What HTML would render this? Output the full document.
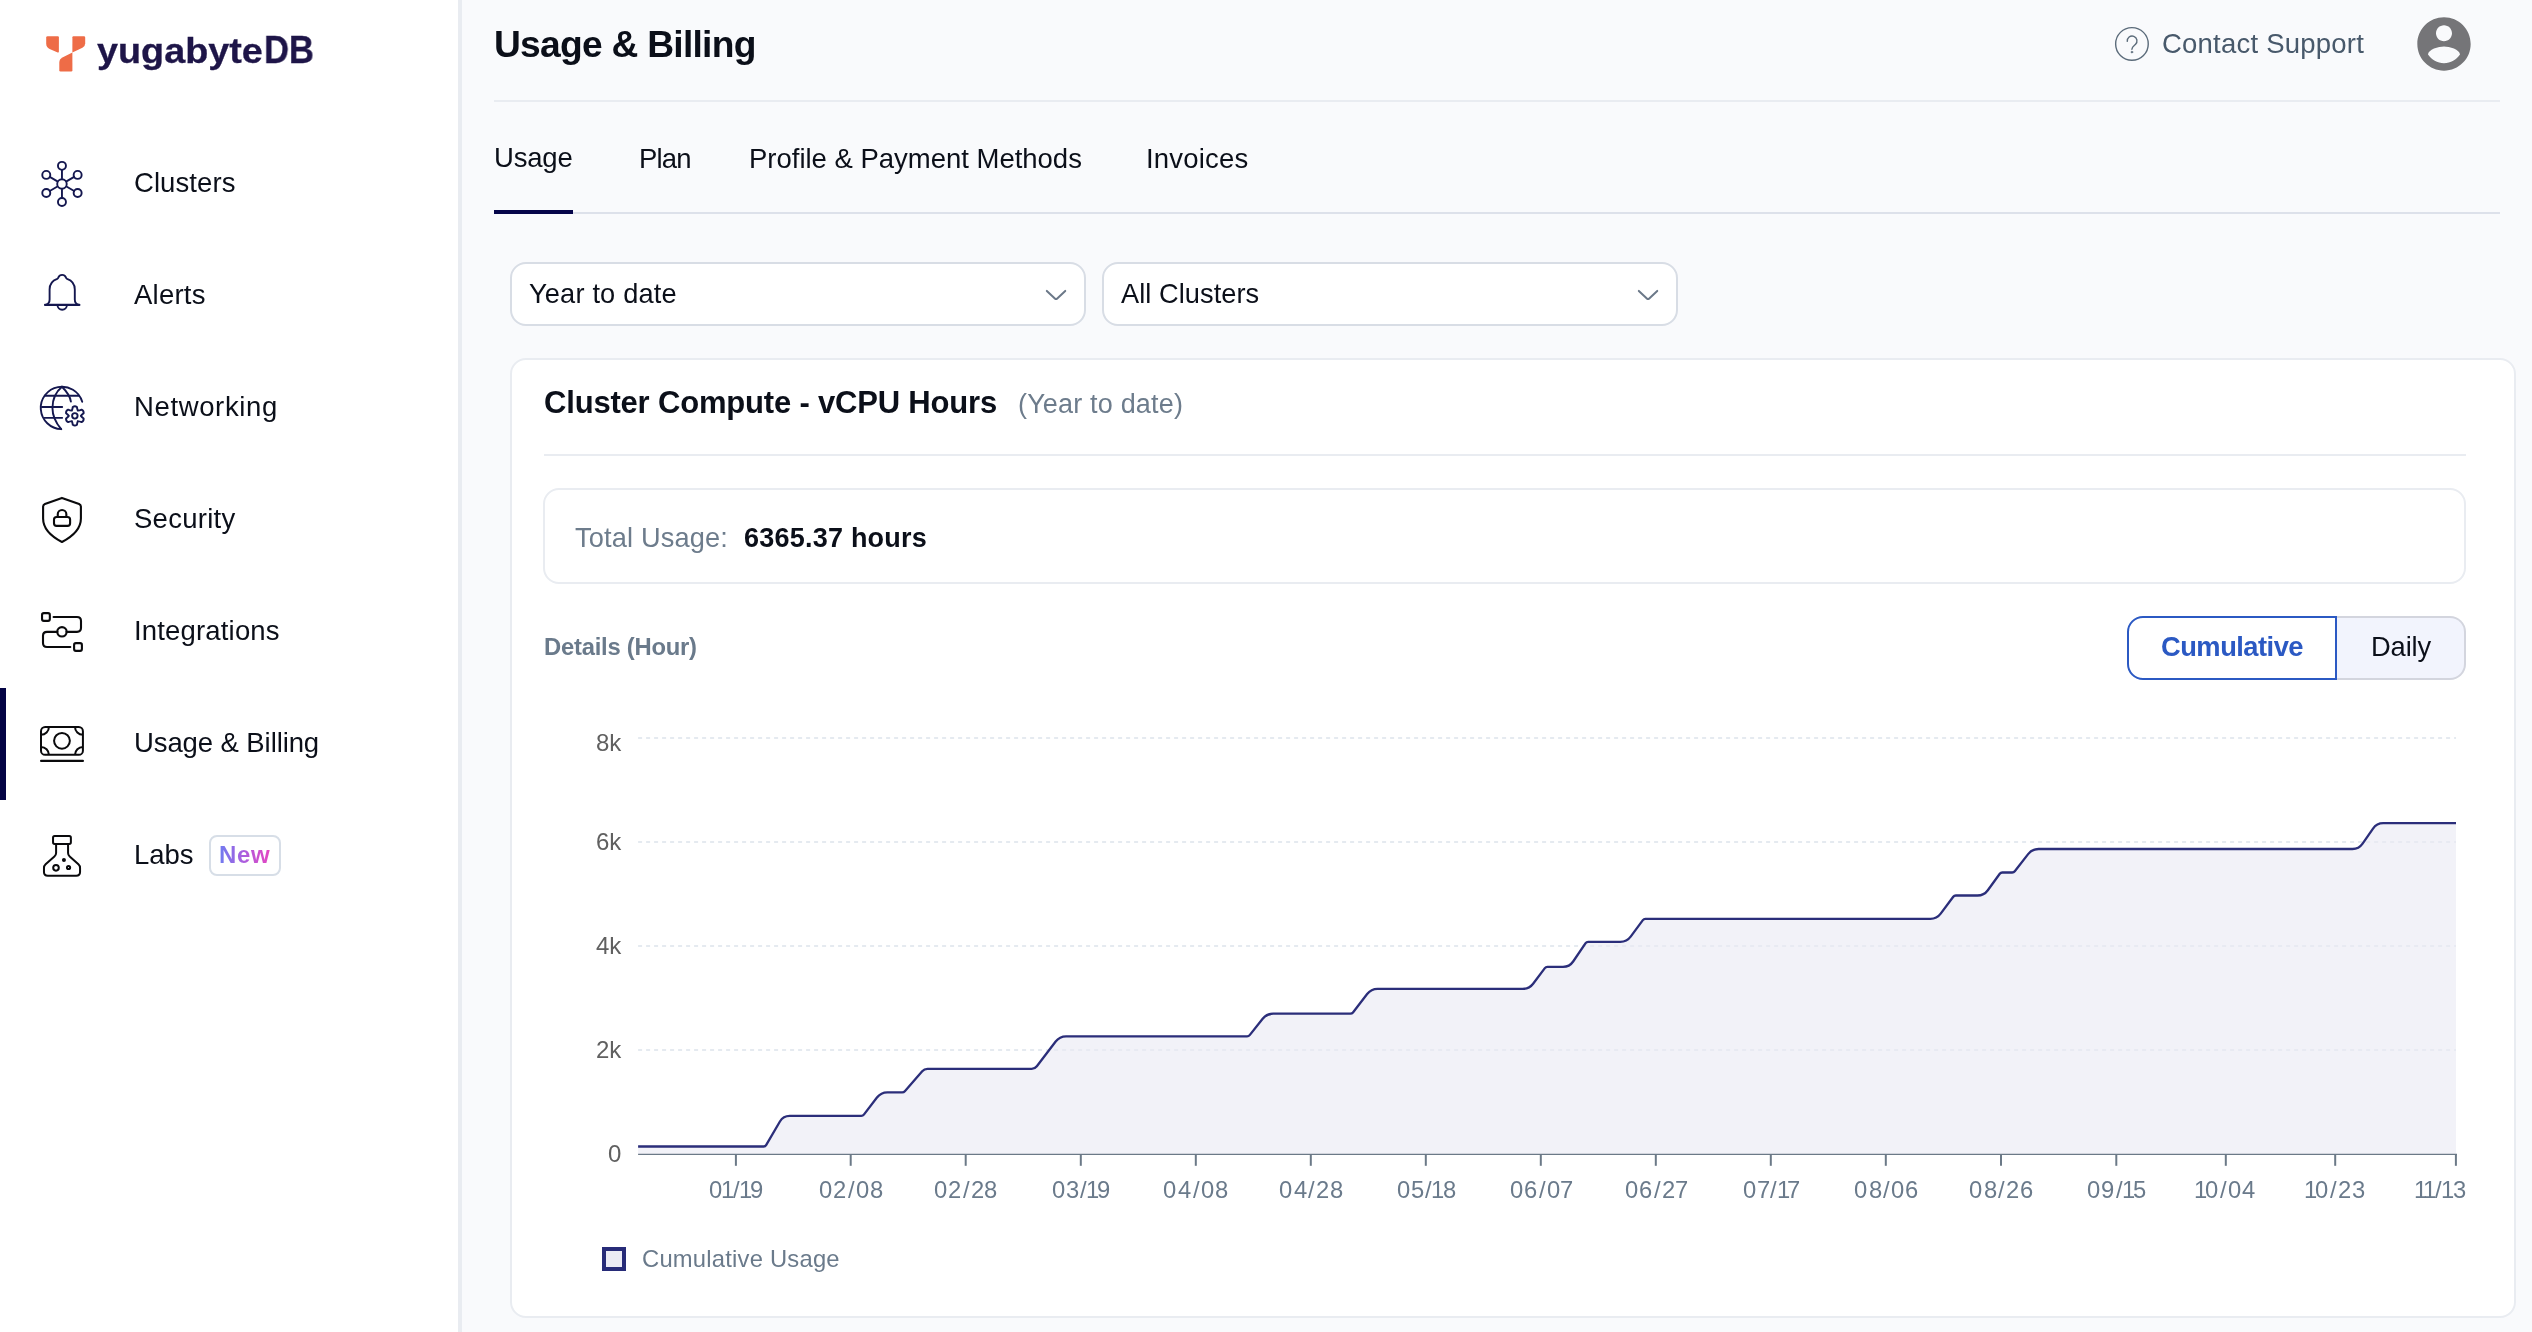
<!DOCTYPE html>
<html lang="en"><head><meta charset="utf-8"><title>Usage &amp; Billing</title>
<style>
html,body{margin:0;padding:0;}
body{width:2532px;height:1332px;overflow:hidden;background:#f9fafc;font-family:"Liberation Sans",sans-serif;position:relative;}
.t{position:absolute;white-space:nowrap;margin:0;padding:0;will-change:transform;}
.a{position:absolute;box-sizing:border-box;}
svg{position:absolute;overflow:visible;}
</style></head><body>

<div class="a" style="left:0;top:0;width:462px;height:1332px;background:#ffffff;border-right:4px solid #e9ecf1;"></div>
<div class="a" style="left:0;top:688px;width:6px;height:112px;background:#040444;"></div>
<svg style="left:0;top:0" width="460" height="100" viewBox="0 0 460 100">
<path d="M47.6 36.2 H57.9 Q58.9 36.2 58.9 37.2 V51.6 Q58.9 52.9 57.7 52.4 L49.6 48.9 Q46.2 47.3 46.2 43.8 V37.6 Q46.2 36.2 47.6 36.2 Z" fill="#ee6c47"/>
<path d="M73.4 36.2 H83.9 Q85.2 36.2 85.2 37.5 V43.2 Q85.2 46.3 82.4 47.7 L72.4 52.6 V37.2 Q72.4 36.2 73.4 36.2 Z" fill="#ee6c47"/>
<path d="M72.4 52.6 V70.3 Q72.4 71.5 71.2 71.5 H60.5 Q59.3 71.5 59.3 70.3 V62.6 Q59.3 59.2 62.4 57.6 Z" fill="#ee6c47"/>
</svg>
<div class="t" style="left:96.90px;top:28.00px;height:46px;line-height:46px;font-size:35.9px;color:#1e1548;letter-spacing:0.000px;font-weight:700;-webkit-text-stroke:0.3px #1e1548;transform:scaleX(1.0521);transform-origin:0 0;">yugabyte</div>
<div class="t" style="left:263.78px;top:25.00px;height:49px;line-height:49px;font-size:38.6px;color:#1e1548;letter-spacing:0.000px;font-weight:700;-webkit-text-stroke:0.3px #1e1548;transform:scaleX(0.8988);transform-origin:0 0;">DB</div>
<div class="t" style="left:133.50px;top:164.00px;height:37px;line-height:37px;font-size:27.5px;color:#0b0f19;letter-spacing:0.076px;">Clusters</div>
<div class="t" style="left:133.50px;top:276.00px;height:37px;line-height:37px;font-size:27.5px;color:#0b0f19;letter-spacing:0.239px;">Alerts</div>
<div class="t" style="left:133.50px;top:388.00px;height:37px;line-height:37px;font-size:27.5px;color:#0b0f19;letter-spacing:0.634px;">Networking</div>
<div class="t" style="left:133.50px;top:500.00px;height:37px;line-height:37px;font-size:27.5px;color:#0b0f19;letter-spacing:0.273px;">Security</div>
<div class="t" style="left:133.50px;top:612.00px;height:37px;line-height:37px;font-size:27.5px;color:#0b0f19;letter-spacing:0.170px;">Integrations</div>
<div class="t" style="left:133.50px;top:724.00px;height:37px;line-height:37px;font-size:27.5px;color:#0b0f19;letter-spacing:-0.094px;">Usage &amp; Billing</div>
<div class="t" style="left:133.50px;top:836.00px;height:37px;line-height:37px;font-size:27.5px;color:#0b0f19;letter-spacing:-0.049px;">Labs</div>
<div class="a" style="left:209px;top:835px;width:72px;height:41px;border:2px solid #d7dee7;border-radius:8px;background:#fff;"></div>
<div class="t" style="left:219.39px;top:838.00px;height:33px;line-height:33px;font-size:24px;color:#8a6be6;letter-spacing:0.600px;font-weight:700;background:linear-gradient(90deg,#6f7cf0 0%,#a75fe0 45%,#e546c2 100%);-webkit-background-clip:text;background-clip:text;color:transparent;">New</div>
<svg style="left:0;top:0" width="460" height="1000" viewBox="0 0 460 1000" fill="none" stroke="#14174f" stroke-width="1.9" stroke-linecap="round" stroke-linejoin="round"><circle cx="61.96" cy="183.94" r="4.75"/><circle cx="61.96" cy="165.84" r="4.0"/><line x1="61.96" y1="178.24" x2="61.96" y2="169.84"/><circle cx="77.64" cy="174.89" r="4.0"/><line x1="66.90" y1="181.09" x2="74.17" y2="176.89"/><circle cx="77.64" cy="192.99" r="4.0"/><line x1="66.90" y1="186.79" x2="74.17" y2="190.99"/><circle cx="61.96" cy="202.04" r="4.0"/><line x1="61.96" y1="189.64" x2="61.96" y2="198.04"/><circle cx="46.28" cy="192.99" r="4.0"/><line x1="57.02" y1="186.79" x2="49.75" y2="190.99"/><circle cx="46.28" cy="174.89" r="4.0"/><line x1="57.02" y1="181.09" x2="49.75" y2="176.89"/></svg>
<svg style="left:0;top:0" width="460" height="1000" viewBox="0 0 460 1000" fill="none" stroke="#14174f" stroke-width="1.9" stroke-linecap="round" stroke-linejoin="round"><path d="M45.0 304.9 H79.4" stroke-width="2.1"/><path d="M46.2 304.6 Q49.6 303.4 49.6 299.4 V289.5 Q49.6 281.6 57.2 278.9 Q58.2 278.4 58.4 277.4 Q59.4 274.9 62.15 274.9 Q64.9 274.9 65.9 277.4 Q66.1 278.4 67.1 278.9 Q74.8 281.6 74.8 289.5 V299.4 Q74.8 303.4 78.2 304.6"/><path d="M57.5 305 A4.7 4.7 0 0 0 66.9 305"/></svg>
<svg style="left:0;top:0" width="460" height="1000" viewBox="0 0 460 1000" fill="none" stroke="#14174f" stroke-width="1.9" stroke-linecap="round" stroke-linejoin="round"><path d="M82.23 401.74 A21.2 21.2 0 1 0 61.22 429.13"/><path d="M61.96 386.74 C55.96 391.74 52.46 399.94 52.46 407.94 C52.46 415.94 56.96 424.14 61.22 429.13"/><path d="M61.96 386.74 C66.96 391.74 70.16 395.94 70.90 401.60"/><path d="M44.8 395.8 H78.6"/><path d="M41.9 406.95 H62.2"/><path d="M44.4 417.85 H62.2"/><circle cx="74.85" cy="415.87" r="2.75"/><path d="M71.85 410.67 Q72.59 408.93 72.78 406.91 Q74.85 405.47 76.92 406.91 Q77.11 408.93 77.85 410.67 Q79.73 410.45 81.58 409.60 Q83.86 410.67 83.65 413.18 Q81.99 414.35 80.85 415.87 Q81.99 417.39 83.65 418.56 Q83.86 421.07 81.58 422.14 Q79.73 421.29 77.85 421.07 Q77.11 422.81 76.92 424.83 Q74.85 426.27 72.78 424.83 Q72.59 422.81 71.85 421.07 Q69.97 421.29 68.12 422.14 Q65.84 421.07 66.05 418.56 Q67.71 417.39 68.85 415.87 Q67.71 414.35 66.05 413.18 Q65.84 410.67 68.12 409.60 Q69.97 410.45 71.85 410.67 Z"/></svg>
<svg style="left:0;top:0" width="460" height="1000" viewBox="0 0 460 1000" fill="none" stroke="#0a0a0c" stroke-width="2.1" stroke-linecap="round" stroke-linejoin="round"><path d="M61.96 497.9 L44.9 503.9 Q43.1 504.6 43.1 506.5 V518.5 C43.1 527.5 49.5 535.5 61.96 542 C74.4 535.5 80.9 527.5 80.9 518.5 V506.5 Q80.9 504.6 79.1 503.9 Z"/><rect x="54.0" y="517.0" width="16.1" height="8.9" rx="2.6"/><path d="M57.75 517 V514.3 A4.3 4.3 0 0 1 66.35 514.3 V517"/></svg>
<svg style="left:0;top:0" width="460" height="1000" viewBox="0 0 460 1000" fill="none" stroke="#0a0a0c" stroke-width="2.1" stroke-linecap="round" stroke-linejoin="round"><rect x="42.04" y="613.1" width="7.8" height="7.8" rx="1.8"/><rect x="74.1" y="643.1" width="7.8" height="7.8" rx="1.8"/><path d="M53.6 616.98 H77 Q81 616.98 81 621 V627.85 Q81 631.85 77 631.85 H66.5"/><circle cx="61.96" cy="631.85" r="4.7"/><path d="M57.4 631.85 H47 Q43 631.85 43 635.85 V642.96 Q43 646.96 47 646.96 H70.3"/></svg>
<svg style="left:0;top:0" width="460" height="1000" viewBox="0 0 460 1000" fill="none" stroke="#0a0a0c" stroke-width="2.0" stroke-linecap="round" stroke-linejoin="round"><rect x="41.0" y="726.95" width="41.92" height="27.9" rx="4.2"/><circle cx="61.96" cy="740.8" r="7.9"/><path d="M48.9 726.95 A7.9 7.9 0 0 1 41 734.85" stroke-linecap="butt"/><path d="M75.02 726.95 A7.9 7.9 0 0 0 82.92 734.85" stroke-linecap="butt"/><path d="M48.9 754.85 A7.9 7.9 0 0 0 41 746.95" stroke-linecap="butt"/><path d="M75.02 754.85 A7.9 7.9 0 0 1 82.92 746.95" stroke-linecap="butt"/><path d="M41.1 760.94 H82.9" stroke-width="2.2"/></svg>
<svg style="left:0;top:0" width="460" height="1000" viewBox="0 0 460 1000" fill="none" stroke="#0a0a0c" stroke-width="2.0" stroke-linecap="round" stroke-linejoin="round"><rect x="53.04" y="836.12" width="17.84" height="7.83" rx="1.6"/><path d="M56.1 843.95 V853 Q56.1 855 54.4 856.5 L45.6 864.3 Q43.97 865.8 43.97 868 V872 Q43.97 875.77 47.8 875.77 H76.2 Q80.05 875.77 80.05 872 V868 Q80.05 865.8 78.4 864.3 L69.7 856.5 Q68.06 855 68.06 853 V843.95"/><circle cx="63.94" cy="859.9" r="1.0" fill="#0a0a0c"/><circle cx="56.0" cy="867.84" r="2.8"/><circle cx="68.55" cy="867.5" r="1.6"/></svg>
<div class="t" style="left:493.57px;top:20.00px;height:48px;line-height:48px;font-size:37.2px;color:#0b0f19;letter-spacing:-0.739px;font-weight:700;">Usage &amp; Billing</div>
<div class="a" style="left:494px;top:100px;width:2006px;height:2px;background:#e9ecf1;"></div>
<svg style="left:2100px;top:10px" width="70" height="70" viewBox="2100 10 70 70" fill="none" stroke="#5b6b7a" stroke-width="1.4" stroke-linecap="round" stroke-linejoin="round">
<circle cx="2131.95" cy="43.9" r="16.3"/>
<path d="M2127.3 41.4 A4.85 4.85 0 1 1 2135.4 44.4 C2133.4 46.2 2132 47 2131.9 49.2"/>
<circle cx="2131.9" cy="52.1" r="0.9" fill="#5b6b7a" stroke-width="0.6"/>
</svg>
<div class="t" style="left:2161.70px;top:25.00px;height:37px;line-height:37px;font-size:27.5px;color:#48596b;letter-spacing:0.219px;">Contact Support</div>
<svg style="left:2412px;top:11.8px" width="64" height="64" viewBox="0 0 24 24"><path fill="#757578" d="M12 2C6.48 2 2 6.48 2 12s4.48 10 10 10 10-4.48 10-10S17.52 2 12 2zm0 3c1.66 0 3 1.34 3 3s-1.34 3-3 3-3-1.34-3-3 1.34-3 3-3zm0 14.2c-2.5 0-4.71-1.28-6-3.22.03-1.99 4-3.08 6-3.08 1.99 0 5.97 1.09 6 3.08-1.29 1.94-3.5 3.22-6 3.22z"/></svg>
<div class="t" style="left:493.68px;top:139.00px;height:37px;line-height:37px;font-size:27.5px;color:#0b0f19;letter-spacing:-0.189px;">Usage</div>
<div class="t" style="left:638.64px;top:140.00px;height:37px;line-height:37px;font-size:27.5px;color:#0b0f19;letter-spacing:-0.835px;">Plan</div>
<div class="t" style="left:749.24px;top:140.00px;height:37px;line-height:37px;font-size:27.5px;color:#0b0f19;letter-spacing:-0.013px;">Profile &amp; Payment Methods</div>
<div class="t" style="left:1145.56px;top:140.00px;height:37px;line-height:37px;font-size:27.5px;color:#0b0f19;letter-spacing:0.206px;">Invoices</div>
<div class="a" style="left:494px;top:212px;width:2006px;height:2px;background:#dde1ea;"></div>
<div class="a" style="left:494px;top:210px;width:79px;height:4px;background:#05054a;"></div>
<div class="a" style="left:510px;top:262px;width:576px;height:64px;border:2px solid #d8dde5;border-radius:16px;background:#fff;"></div>
<div class="t" style="left:528.60px;top:275.00px;height:37px;line-height:37px;font-size:27.2px;color:#0b0f19;letter-spacing:0.179px;">Year to date</div>
<svg style="left:0;top:0" width="2532" height="400" viewBox="0 0 2532 400" fill="none" stroke="#6b7888" stroke-width="2" stroke-linecap="round" stroke-linejoin="round"><path d="M1046.84 290.9 L1054.84 298.4 Q1056.04 299.5 1057.24 298.4 L1065.24 290.9"/></svg>
<div class="a" style="left:1102px;top:262px;width:576px;height:64px;border:2px solid #d8dde5;border-radius:16px;background:#fff;"></div>
<div class="t" style="left:1120.75px;top:275.00px;height:37px;line-height:37px;font-size:27.2px;color:#0b0f19;letter-spacing:0.059px;">All Clusters</div>
<svg style="left:0;top:0" width="2532" height="400" viewBox="0 0 2532 400" fill="none" stroke="#6b7888" stroke-width="2" stroke-linecap="round" stroke-linejoin="round"><path d="M1638.84 290.9 L1646.84 298.4 Q1648.04 299.5 1649.24 298.4 L1657.24 290.9"/></svg>
<div class="a" style="left:510px;top:358px;width:2006px;height:960px;border:2px solid #e9ecf1;border-radius:16px;background:#fff;"></div>
<div class="t" style="left:544.03px;top:382.00px;height:41px;line-height:41px;font-size:31px;color:#0b0f19;letter-spacing:-0.186px;font-weight:700;">Cluster Compute - vCPU Hours</div>
<div class="t" style="left:1018.08px;top:386.00px;height:36px;line-height:36px;font-size:27px;color:#6d7c8c;letter-spacing:0.176px;">(Year to date)</div>
<div class="a" style="left:544px;top:454px;width:1922px;height:2px;background:#e9ecf1;"></div>
<div class="a" style="left:543px;top:488px;width:1923px;height:96px;border:2px solid #e9ecf1;border-radius:16px;background:#fff;"></div>
<div class="t" style="left:574.69px;top:519.00px;height:37px;line-height:37px;font-size:27.2px;color:#6d7c8c;letter-spacing:0.161px;">Total Usage:</div>
<div class="t" style="left:743.51px;top:520.00px;height:36px;line-height:36px;font-size:27px;color:#0b0f19;letter-spacing:0.224px;font-weight:700;">6365.37 hours</div>
<div class="t" style="left:543.91px;top:630.00px;height:33px;line-height:33px;font-size:23.8px;color:#6a7a8b;letter-spacing:-0.235px;font-weight:700;">Details (Hour)</div>
<div class="a" style="left:2336px;top:616px;width:130px;height:64px;border:2px solid #d3d5de;border-left:none;border-radius:0 16px 16px 0;background:#f2f4fd;"></div>
<div class="a" style="left:2127px;top:616px;width:210px;height:64px;border:2px solid #2b59c3;border-radius:16px 0 0 16px;background:#fff;"></div>
<div class="t" style="left:2160.78px;top:628.00px;height:37px;line-height:37px;font-size:27.3px;color:#2b59c3;letter-spacing:-0.510px;font-weight:700;">Cumulative</div>
<div class="t" style="left:2370.56px;top:628.00px;height:37px;line-height:37px;font-size:27.3px;color:#0b0f19;letter-spacing:-0.120px;">Daily</div>
<svg style="left:0;top:0" width="2532" height="1332" viewBox="0 0 2532 1332"><line x1="638.1" y1="738.0" x2="2456.0" y2="738.0" stroke="#e5eaf0" stroke-width="2" stroke-dasharray="4 4"/><line x1="638.1" y1="842.0" x2="2456.0" y2="842.0" stroke="#e5eaf0" stroke-width="2" stroke-dasharray="4 4"/><line x1="638.1" y1="946.0" x2="2456.0" y2="946.0" stroke="#e5eaf0" stroke-width="2" stroke-dasharray="4 4"/><line x1="638.1" y1="1050.0" x2="2456.0" y2="1050.0" stroke="#e5eaf0" stroke-width="2" stroke-dasharray="4 4"/><path d="M638.10 1146.50 L763.70 1146.50 Q765.30 1146.50 766.11 1145.12 L779.92 1121.51 Q783.20 1115.90 789.70 1115.90 L861.30 1115.90 Q862.90 1115.90 863.87 1114.63 L876.95 1097.56 Q880.90 1092.40 887.40 1092.40 L902.20 1092.40 Q903.80 1092.40 904.85 1091.19 L922.20 1071.22 Q924.30 1068.80 927.50 1068.80 L1031.70 1068.80 Q1034.90 1068.80 1036.84 1066.26 L1055.66 1041.57 Q1059.60 1036.40 1066.10 1036.40 L1247.10 1036.40 Q1248.70 1036.40 1249.69 1035.15 L1262.66 1018.79 Q1266.70 1013.70 1273.20 1013.70 L1350.40 1013.70 Q1352.00 1013.70 1352.98 1012.43 L1367.13 994.05 Q1371.10 988.90 1377.60 988.90 L1522.70 988.90 Q1529.20 988.90 1533.12 983.71 L1544.84 968.18 Q1545.80 966.90 1547.40 966.90 L1563.00 966.90 Q1569.50 966.90 1573.15 961.52 L1585.60 943.12 Q1586.50 941.80 1588.10 941.80 L1620.30 941.80 Q1626.80 941.80 1630.67 936.58 L1642.85 920.18 Q1643.80 918.90 1645.40 918.90 L1930.30 918.90 Q1936.80 918.90 1940.68 913.68 L1953.25 896.78 Q1954.20 895.50 1955.80 895.50 L1977.50 895.50 Q1984.00 895.50 1987.82 890.24 L1999.76 873.79 Q2000.70 872.50 2002.30 872.50 L2012.20 872.50 Q2013.80 872.50 2014.78 871.24 L2028.11 854.13 Q2032.10 849.00 2038.60 849.00 L2352.40 849.00 Q2358.90 849.00 2362.59 843.65 L2373.01 828.55 Q2376.70 823.20 2383.20 823.20 L2456.00 823.20 L2456.0 1154.0 L638.1 1154.0 Z" fill="#e9e9f4" fill-opacity="0.6" stroke="none"/><path d="M638.10 1146.50 L763.70 1146.50 Q765.30 1146.50 766.11 1145.12 L779.92 1121.51 Q783.20 1115.90 789.70 1115.90 L861.30 1115.90 Q862.90 1115.90 863.87 1114.63 L876.95 1097.56 Q880.90 1092.40 887.40 1092.40 L902.20 1092.40 Q903.80 1092.40 904.85 1091.19 L922.20 1071.22 Q924.30 1068.80 927.50 1068.80 L1031.70 1068.80 Q1034.90 1068.80 1036.84 1066.26 L1055.66 1041.57 Q1059.60 1036.40 1066.10 1036.40 L1247.10 1036.40 Q1248.70 1036.40 1249.69 1035.15 L1262.66 1018.79 Q1266.70 1013.70 1273.20 1013.70 L1350.40 1013.70 Q1352.00 1013.70 1352.98 1012.43 L1367.13 994.05 Q1371.10 988.90 1377.60 988.90 L1522.70 988.90 Q1529.20 988.90 1533.12 983.71 L1544.84 968.18 Q1545.80 966.90 1547.40 966.90 L1563.00 966.90 Q1569.50 966.90 1573.15 961.52 L1585.60 943.12 Q1586.50 941.80 1588.10 941.80 L1620.30 941.80 Q1626.80 941.80 1630.67 936.58 L1642.85 920.18 Q1643.80 918.90 1645.40 918.90 L1930.30 918.90 Q1936.80 918.90 1940.68 913.68 L1953.25 896.78 Q1954.20 895.50 1955.80 895.50 L1977.50 895.50 Q1984.00 895.50 1987.82 890.24 L1999.76 873.79 Q2000.70 872.50 2002.30 872.50 L2012.20 872.50 Q2013.80 872.50 2014.78 871.24 L2028.11 854.13 Q2032.10 849.00 2038.60 849.00 L2352.40 849.00 Q2358.90 849.00 2362.59 843.65 L2373.01 828.55 Q2376.70 823.20 2383.20 823.20 L2456.00 823.20" fill="none" stroke="#2b2e7a" stroke-width="2.3" stroke-linejoin="round"/><line x1="638.1" y1="1154.4" x2="2457.0" y2="1154.4" stroke="#6b7987" stroke-width="1.4"/><line x1="735.9" y1="1154" x2="735.9" y2="1165.8" stroke="#6b7987" stroke-width="2"/><line x1="850.7" y1="1154" x2="850.7" y2="1165.8" stroke="#6b7987" stroke-width="2"/><line x1="965.7" y1="1154" x2="965.7" y2="1165.8" stroke="#6b7987" stroke-width="2"/><line x1="1080.8" y1="1154" x2="1080.8" y2="1165.8" stroke="#6b7987" stroke-width="2"/><line x1="1195.8" y1="1154" x2="1195.8" y2="1165.8" stroke="#6b7987" stroke-width="2"/><line x1="1310.8" y1="1154" x2="1310.8" y2="1165.8" stroke="#6b7987" stroke-width="2"/><line x1="1425.8" y1="1154" x2="1425.8" y2="1165.8" stroke="#6b7987" stroke-width="2"/><line x1="1540.8" y1="1154" x2="1540.8" y2="1165.8" stroke="#6b7987" stroke-width="2"/><line x1="1655.8" y1="1154" x2="1655.8" y2="1165.8" stroke="#6b7987" stroke-width="2"/><line x1="1770.8" y1="1154" x2="1770.8" y2="1165.8" stroke="#6b7987" stroke-width="2"/><line x1="1885.8" y1="1154" x2="1885.8" y2="1165.8" stroke="#6b7987" stroke-width="2"/><line x1="2001.0" y1="1154" x2="2001.0" y2="1165.8" stroke="#6b7987" stroke-width="2"/><line x1="2116.3" y1="1154" x2="2116.3" y2="1165.8" stroke="#6b7987" stroke-width="2"/><line x1="2225.8" y1="1154" x2="2225.8" y2="1165.8" stroke="#6b7987" stroke-width="2"/><line x1="2335.2" y1="1154" x2="2335.2" y2="1165.8" stroke="#6b7987" stroke-width="2"/><line x1="2455.9" y1="1154" x2="2455.9" y2="1165.8" stroke="#6b7987" stroke-width="2"/></svg>
<div class="t" style="left:595.91px;top:726.00px;height:33px;line-height:33px;font-size:24.0px;color:#606060;letter-spacing:0.000px;">8k</div>
<div class="t" style="left:595.91px;top:825.00px;height:33px;line-height:33px;font-size:24.0px;color:#606060;letter-spacing:0.000px;">6k</div>
<div class="t" style="left:595.91px;top:929.00px;height:33px;line-height:33px;font-size:24.0px;color:#606060;letter-spacing:0.000px;">4k</div>
<div class="t" style="left:595.91px;top:1033.00px;height:33px;line-height:33px;font-size:24.0px;color:#606060;letter-spacing:0.000px;">2k</div>
<div class="t" style="left:608.08px;top:1137.00px;height:33px;line-height:33px;font-size:24.0px;color:#606060;letter-spacing:0.000px;">0</div>
<div class="t" style="left:708.56px;top:1173.00px;height:33px;line-height:33px;font-size:23.8px;color:#6a7a8b;letter-spacing:0.000px;">0</div><div class="t" style="left:721.21px;top:1173.00px;height:33px;line-height:33px;font-size:23.8px;color:#6a7a8b;letter-spacing:0.000px;">1</div><div class="t" style="left:732.77px;top:1173.00px;height:33px;line-height:33px;font-size:23.8px;color:#6a7a8b;letter-spacing:0.000px;">/</div><div class="t" style="left:739.06px;top:1173.00px;height:33px;line-height:33px;font-size:23.8px;color:#6a7a8b;letter-spacing:0.000px;">1</div><div class="t" style="left:750.07px;top:1173.00px;height:33px;line-height:33px;font-size:23.8px;color:#6a7a8b;letter-spacing:0.000px;">9</div>
<div class="t" style="left:818.93px;top:1173.00px;height:33px;line-height:33px;font-size:23.8px;color:#6a7a8b;letter-spacing:0.000px;">0</div><div class="t" style="left:833.19px;top:1173.00px;height:33px;line-height:33px;font-size:23.8px;color:#6a7a8b;letter-spacing:0.000px;">2</div><div class="t" style="left:847.68px;top:1173.00px;height:33px;line-height:33px;font-size:23.8px;color:#6a7a8b;letter-spacing:0.000px;">/</div><div class="t" style="left:855.75px;top:1173.00px;height:33px;line-height:33px;font-size:23.8px;color:#6a7a8b;letter-spacing:0.000px;">0</div><div class="t" style="left:870.07px;top:1173.00px;height:33px;line-height:33px;font-size:23.8px;color:#6a7a8b;letter-spacing:0.000px;">8</div>
<div class="t" style="left:934.43px;top:1173.00px;height:33px;line-height:33px;font-size:23.8px;color:#6a7a8b;letter-spacing:0.000px;">0</div><div class="t" style="left:948.49px;top:1173.00px;height:33px;line-height:33px;font-size:23.8px;color:#6a7a8b;letter-spacing:0.000px;">2</div><div class="t" style="left:962.83px;top:1173.00px;height:33px;line-height:33px;font-size:23.8px;color:#6a7a8b;letter-spacing:0.000px;">/</div><div class="t" style="left:970.54px;top:1173.00px;height:33px;line-height:33px;font-size:23.8px;color:#6a7a8b;letter-spacing:0.000px;">2</div><div class="t" style="left:984.46px;top:1173.00px;height:33px;line-height:33px;font-size:23.8px;color:#6a7a8b;letter-spacing:0.000px;">8</div>
<div class="t" style="left:1051.65px;top:1173.00px;height:33px;line-height:33px;font-size:23.8px;color:#6a7a8b;letter-spacing:0.000px;">0</div><div class="t" style="left:1065.89px;top:1173.00px;height:33px;line-height:33px;font-size:23.8px;color:#6a7a8b;letter-spacing:0.000px;">3</div><div class="t" style="left:1080.27px;top:1173.00px;height:33px;line-height:33px;font-size:23.8px;color:#6a7a8b;letter-spacing:0.000px;">/</div><div class="t" style="left:1086.49px;top:1173.00px;height:33px;line-height:33px;font-size:23.8px;color:#6a7a8b;letter-spacing:0.000px;">1</div><div class="t" style="left:1097.42px;top:1173.00px;height:33px;line-height:33px;font-size:23.8px;color:#6a7a8b;letter-spacing:0.000px;">9</div>
<div class="t" style="left:1163.24px;top:1173.00px;height:33px;line-height:33px;font-size:23.8px;color:#6a7a8b;letter-spacing:0.000px;">0</div><div class="t" style="left:1178.06px;top:1173.00px;height:33px;line-height:33px;font-size:23.8px;color:#6a7a8b;letter-spacing:0.000px;">4</div><div class="t" style="left:1192.97px;top:1173.00px;height:33px;line-height:33px;font-size:23.8px;color:#6a7a8b;letter-spacing:0.000px;">/</div><div class="t" style="left:1201.04px;top:1173.00px;height:33px;line-height:33px;font-size:23.8px;color:#6a7a8b;letter-spacing:0.000px;">0</div><div class="t" style="left:1215.36px;top:1173.00px;height:33px;line-height:33px;font-size:23.8px;color:#6a7a8b;letter-spacing:0.000px;">8</div>
<div class="t" style="left:1278.87px;top:1173.00px;height:33px;line-height:33px;font-size:23.8px;color:#6a7a8b;letter-spacing:0.000px;">0</div><div class="t" style="left:1293.56px;top:1173.00px;height:33px;line-height:33px;font-size:23.8px;color:#6a7a8b;letter-spacing:0.000px;">4</div><div class="t" style="left:1308.36px;top:1173.00px;height:33px;line-height:33px;font-size:23.8px;color:#6a7a8b;letter-spacing:0.000px;">/</div><div class="t" style="left:1316.13px;top:1173.00px;height:33px;line-height:33px;font-size:23.8px;color:#6a7a8b;letter-spacing:0.000px;">2</div><div class="t" style="left:1330.13px;top:1173.00px;height:33px;line-height:33px;font-size:23.8px;color:#6a7a8b;letter-spacing:0.000px;">8</div>
<div class="t" style="left:1396.96px;top:1173.00px;height:33px;line-height:33px;font-size:23.8px;color:#6a7a8b;letter-spacing:0.000px;">0</div><div class="t" style="left:1410.96px;top:1173.00px;height:33px;line-height:33px;font-size:23.8px;color:#6a7a8b;letter-spacing:0.000px;">5</div><div class="t" style="left:1425.19px;top:1173.00px;height:33px;line-height:33px;font-size:23.8px;color:#6a7a8b;letter-spacing:0.000px;">/</div><div class="t" style="left:1431.43px;top:1173.00px;height:33px;line-height:33px;font-size:23.8px;color:#6a7a8b;letter-spacing:0.000px;">1</div><div class="t" style="left:1442.54px;top:1173.00px;height:33px;line-height:33px;font-size:23.8px;color:#6a7a8b;letter-spacing:0.000px;">8</div>
<div class="t" style="left:1509.79px;top:1173.00px;height:33px;line-height:33px;font-size:23.8px;color:#6a7a8b;letter-spacing:0.000px;">0</div><div class="t" style="left:1524.11px;top:1173.00px;height:33px;line-height:33px;font-size:23.8px;color:#6a7a8b;letter-spacing:0.000px;">6</div><div class="t" style="left:1538.86px;top:1173.00px;height:33px;line-height:33px;font-size:23.8px;color:#6a7a8b;letter-spacing:0.000px;">/</div><div class="t" style="left:1546.85px;top:1173.00px;height:33px;line-height:33px;font-size:23.8px;color:#6a7a8b;letter-spacing:0.000px;">0</div><div class="t" style="left:1560.38px;top:1173.00px;height:33px;line-height:33px;font-size:23.8px;color:#6a7a8b;letter-spacing:0.000px;">7</div>
<div class="t" style="left:1624.81px;top:1173.00px;height:33px;line-height:33px;font-size:23.8px;color:#6a7a8b;letter-spacing:0.000px;">0</div><div class="t" style="left:1639.18px;top:1173.00px;height:33px;line-height:33px;font-size:23.8px;color:#6a7a8b;letter-spacing:0.000px;">6</div><div class="t" style="left:1653.96px;top:1173.00px;height:33px;line-height:33px;font-size:23.8px;color:#6a7a8b;letter-spacing:0.000px;">/</div><div class="t" style="left:1661.79px;top:1173.00px;height:33px;line-height:33px;font-size:23.8px;color:#6a7a8b;letter-spacing:0.000px;">2</div><div class="t" style="left:1675.16px;top:1173.00px;height:33px;line-height:33px;font-size:23.8px;color:#6a7a8b;letter-spacing:0.000px;">7</div>
<div class="t" style="left:1743.18px;top:1173.00px;height:33px;line-height:33px;font-size:23.8px;color:#6a7a8b;letter-spacing:0.000px;">0</div><div class="t" style="left:1756.69px;top:1173.00px;height:33px;line-height:33px;font-size:23.8px;color:#6a7a8b;letter-spacing:0.000px;">7</div><div class="t" style="left:1770.49px;top:1173.00px;height:33px;line-height:33px;font-size:23.8px;color:#6a7a8b;letter-spacing:0.000px;">/</div><div class="t" style="left:1776.75px;top:1173.00px;height:33px;line-height:33px;font-size:23.8px;color:#6a7a8b;letter-spacing:0.000px;">1</div><div class="t" style="left:1787.19px;top:1173.00px;height:33px;line-height:33px;font-size:23.8px;color:#6a7a8b;letter-spacing:0.000px;">7</div>
<div class="t" style="left:1854.45px;top:1173.00px;height:33px;line-height:33px;font-size:23.8px;color:#6a7a8b;letter-spacing:0.000px;">0</div><div class="t" style="left:1868.59px;top:1173.00px;height:33px;line-height:33px;font-size:23.8px;color:#6a7a8b;letter-spacing:0.000px;">8</div><div class="t" style="left:1883.01px;top:1173.00px;height:33px;line-height:33px;font-size:23.8px;color:#6a7a8b;letter-spacing:0.000px;">/</div><div class="t" style="left:1890.94px;top:1173.00px;height:33px;line-height:33px;font-size:23.8px;color:#6a7a8b;letter-spacing:0.000px;">0</div><div class="t" style="left:1905.19px;top:1173.00px;height:33px;line-height:33px;font-size:23.8px;color:#6a7a8b;letter-spacing:0.000px;">6</div>
<div class="t" style="left:1969.40px;top:1173.00px;height:33px;line-height:33px;font-size:23.8px;color:#6a7a8b;letter-spacing:0.000px;">0</div><div class="t" style="left:1983.65px;top:1173.00px;height:33px;line-height:33px;font-size:23.8px;color:#6a7a8b;letter-spacing:0.000px;">8</div><div class="t" style="left:1998.16px;top:1173.00px;height:33px;line-height:33px;font-size:23.8px;color:#6a7a8b;letter-spacing:0.000px;">/</div><div class="t" style="left:2005.98px;top:1173.00px;height:33px;line-height:33px;font-size:23.8px;color:#6a7a8b;letter-spacing:0.000px;">2</div><div class="t" style="left:2020.13px;top:1173.00px;height:33px;line-height:33px;font-size:23.8px;color:#6a7a8b;letter-spacing:0.000px;">6</div>
<div class="t" style="left:2087.11px;top:1173.00px;height:33px;line-height:33px;font-size:23.8px;color:#6a7a8b;letter-spacing:0.000px;">0</div><div class="t" style="left:2101.23px;top:1173.00px;height:33px;line-height:33px;font-size:23.8px;color:#6a7a8b;letter-spacing:0.000px;">9</div><div class="t" style="left:2115.58px;top:1173.00px;height:33px;line-height:33px;font-size:23.8px;color:#6a7a8b;letter-spacing:0.000px;">/</div><div class="t" style="left:2121.88px;top:1173.00px;height:33px;line-height:33px;font-size:23.8px;color:#6a7a8b;letter-spacing:0.000px;">1</div><div class="t" style="left:2132.91px;top:1173.00px;height:33px;line-height:33px;font-size:23.8px;color:#6a7a8b;letter-spacing:0.000px;">5</div>
<div class="t" style="left:2193.83px;top:1173.00px;height:33px;line-height:33px;font-size:23.8px;color:#6a7a8b;letter-spacing:0.000px;">1</div><div class="t" style="left:2205.04px;top:1173.00px;height:33px;line-height:33px;font-size:23.8px;color:#6a7a8b;letter-spacing:0.000px;">0</div><div class="t" style="left:2219.58px;top:1173.00px;height:33px;line-height:33px;font-size:23.8px;color:#6a7a8b;letter-spacing:0.000px;">/</div><div class="t" style="left:2227.50px;top:1173.00px;height:33px;line-height:33px;font-size:23.8px;color:#6a7a8b;letter-spacing:0.000px;">0</div><div class="t" style="left:2242.12px;top:1173.00px;height:33px;line-height:33px;font-size:23.8px;color:#6a7a8b;letter-spacing:0.000px;">4</div>
<div class="t" style="left:2303.77px;top:1173.00px;height:33px;line-height:33px;font-size:23.8px;color:#6a7a8b;letter-spacing:0.000px;">1</div><div class="t" style="left:2315.07px;top:1173.00px;height:33px;line-height:33px;font-size:23.8px;color:#6a7a8b;letter-spacing:0.000px;">0</div><div class="t" style="left:2329.70px;top:1173.00px;height:33px;line-height:33px;font-size:23.8px;color:#6a7a8b;letter-spacing:0.000px;">/</div><div class="t" style="left:2337.51px;top:1173.00px;height:33px;line-height:33px;font-size:23.8px;color:#6a7a8b;letter-spacing:0.000px;">2</div><div class="t" style="left:2351.64px;top:1173.00px;height:33px;line-height:33px;font-size:23.8px;color:#6a7a8b;letter-spacing:0.000px;">3</div>
<div class="t" style="left:2413.78px;top:1173.00px;height:33px;line-height:33px;font-size:23.8px;color:#6a7a8b;letter-spacing:0.000px;">1</div><div class="t" style="left:2423.37px;top:1173.00px;height:33px;line-height:33px;font-size:23.8px;color:#6a7a8b;letter-spacing:0.000px;">1</div><div class="t" style="left:2434.95px;top:1173.00px;height:33px;line-height:33px;font-size:23.8px;color:#6a7a8b;letter-spacing:0.000px;">/</div><div class="t" style="left:2441.24px;top:1173.00px;height:33px;line-height:33px;font-size:23.8px;color:#6a7a8b;letter-spacing:0.000px;">1</div><div class="t" style="left:2452.53px;top:1173.00px;height:33px;line-height:33px;font-size:23.8px;color:#6a7a8b;letter-spacing:0.000px;">3</div>
<div class="a" style="left:602px;top:1247px;width:24px;height:24px;border:4px solid #272b78;background:#ebebf4;"></div>
<div class="t" style="left:642.09px;top:1242.00px;height:33px;line-height:33px;font-size:23.8px;color:#6a7a8b;letter-spacing:0.209px;">Cumulative Usage</div>
</body></html>
